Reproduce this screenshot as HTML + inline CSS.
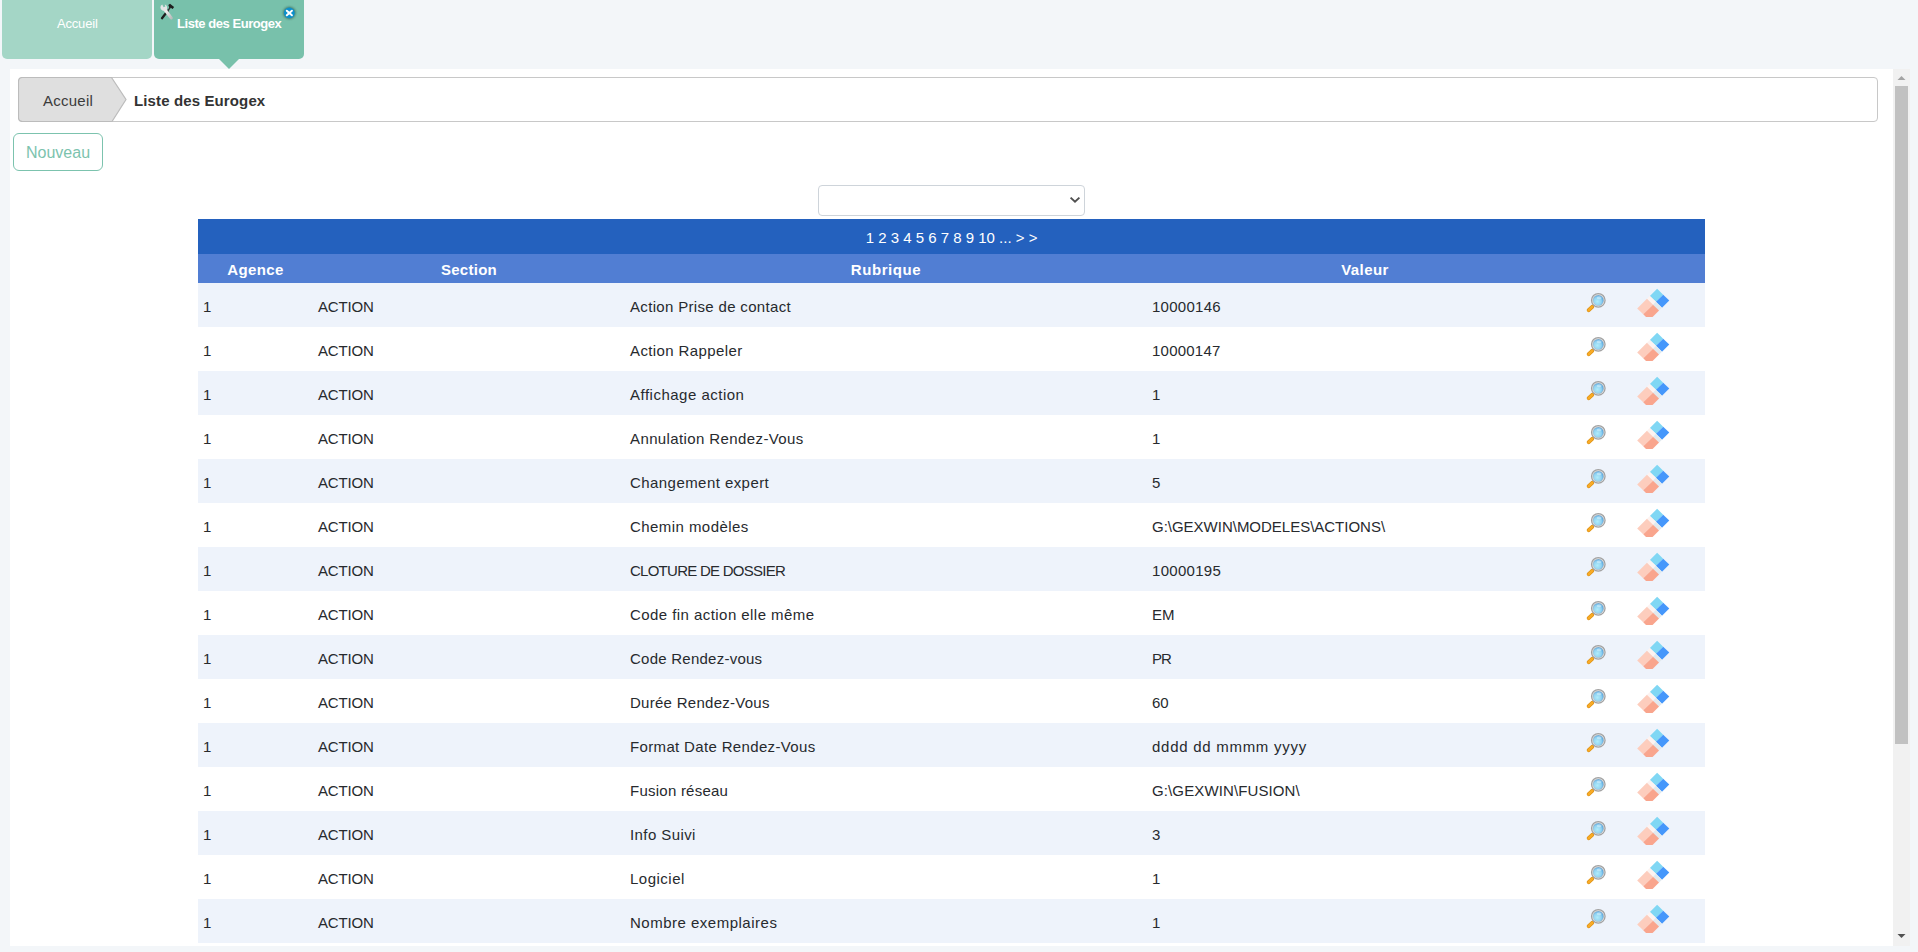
<!DOCTYPE html>
<html><head><meta charset="utf-8">
<style>
html,body{margin:0;padding:0;width:1918px;height:952px;overflow:hidden;background:#f3f6f9;font-family:"Liberation Sans",sans-serif;}
.abs{position:absolute;}
.tab1{left:2px;top:0;width:150px;height:59px;background:#a4d6c6;border-radius:0 0 5px 5px;}
.tab1 .t{position:absolute;left:55px;top:17px;font-size:13px;line-height:13px;color:#fff;white-space:nowrap;}
.tab2{left:154px;top:0;width:150px;height:59px;background:#78c1ab;border-radius:0 0 5px 5px;}
.tab2 .t{position:absolute;left:23px;top:17px;font-size:13px;line-height:13px;font-weight:bold;color:#fff;white-space:nowrap;}
.tab2arrow{left:218px;top:58px;width:0;height:0;border-left:11px solid transparent;border-right:11px solid transparent;border-top:11px solid #78c1ab;}
.content{left:10px;top:69px;width:1900px;height:877px;background:#fff;}
.sb{left:1893px;top:69px;width:17px;height:877px;background:#f1f1f1;}
.thumb{left:1895px;top:86px;width:13px;height:658px;background:#c1c1c1;}
.bc{left:18px;top:77px;width:1858px;height:43px;border:1px solid #c8c8c8;border-radius:4px;background:#fff;}
.bc .home{position:absolute;left:24px;top:15px;font-size:15px;line-height:15px;color:#3b3b3b;white-space:nowrap;}
.bc .cur{position:absolute;left:115px;top:15px;font-size:15px;line-height:15px;font-weight:bold;color:#333;white-space:nowrap;}
.btn{left:13px;top:133px;width:88px;height:36px;border:1px solid #7cc3ae;border-radius:6px;}
.btn .t{position:absolute;left:12px;top:11px;color:#7cc3ae;font-size:16px;line-height:16px;white-space:nowrap;}
.sel{left:818px;top:185px;width:265px;height:29px;border:1px solid #ced4da;border-radius:4px;background:#fff;}
table{position:absolute;left:198px;top:219px;width:1507px;border-collapse:collapse;table-layout:fixed;font-size:15px;color:#272a2e;}
td,th{padding:0 0 0 5px;white-space:nowrap;}
tr.pg{height:35px;}
tr.pg td{background:#2461be;color:#fff;text-align:center;font-size:15px;padding:1px 0 0 0;}
tr.hd{height:29px;}
tr.hd th{background:#517ed3;color:#fff;text-align:center;font-size:15px;padding:2px 0 0 0;}
tr.r{height:44px;}
tr.r td{vertical-align:top;padding-top:15px;line-height:17px;position:relative;}
tr.r:nth-child(odd) td{background:#eef3fb;}
td.ic{padding:0 !important;}
.mg{position:absolute;left:-1px;top:5px;}
.er{position:absolute;left:-1px;top:1px;}
</style></head>
<body>
<svg width="0" height="0" style="position:absolute">
<defs>
<radialGradient id="lens" cx="0.42" cy="0.6" r="0.6"><stop offset="0" stop-color="#b0ecfa"/><stop offset="0.6" stop-color="#92d3f2"/><stop offset="1" stop-color="#4e9fdc"/></radialGradient>
<clipPath id="ecl"><rect x="0" y="0" width="42" height="33"/></clipPath>
<symbol id="mag" viewBox="0 0 30 28">
<line x1="12.6" y1="16.2" x2="10" y2="18.8" stroke="#a9a9a9" stroke-width="2.6"/>
<line x1="10.2" y1="18.8" x2="6.7" y2="22.2" stroke="#d88c12" stroke-width="3.9" stroke-linecap="round"/>
<line x1="10.2" y1="18.8" x2="6.7" y2="22.2" stroke="#f8ab26" stroke-width="2.7" stroke-linecap="round"/>
<circle cx="16.3" cy="12.35" r="6.75" fill="#f0f0f0" stroke="#a2a2a2" stroke-width="1.3"/>
<circle cx="16.3" cy="12.35" r="5.4" fill="url(#lens)" stroke="#b9b9b9" stroke-width="0.6"/>
<ellipse cx="17.2" cy="9.8" rx="2.4" ry="1.5" fill="#e8f8ff" opacity="0.45"/>
</symbol>
<symbol id="era" viewBox="0 0 42 38">
<g clip-path="url(#ecl)">
<polygon points="25.15,4.8 31.21,10.69 23.94,17.84 17.87,11.95" fill="#80d7f4"/>
<polygon points="31.21,10.69 37.27,16.57 30.0,23.72 23.94,17.84" fill="#4597fb"/>
<polygon points="17.87,11.95 23.94,17.84 21.01,20.71 14.95,14.82" fill="#fdf3f1"/>
<polygon points="23.94,17.84 30.0,23.72 27.07,26.6 21.01,20.71" fill="#e1e9ee"/>
<polygon points="14.95,14.82 21.01,20.71 11.24,30.31 5.18,24.42" fill="#fdcdbd"/>
<polygon points="21.01,20.71 27.07,26.6 17.3,36.2 11.24,30.31" fill="#f9a58d"/>
</g>
</symbol>
</defs></svg>
<div class="abs tab1"><span class="t"><span style="letter-spacing:-0.183px">Accueil</span></span></div>
<div class="abs tab2"><span class="t"><span style="letter-spacing:-0.45px">Liste des Eurogex</span></span>
<svg class="abs" style="left:2px;top:0px" width="24" height="24" viewBox="0 0 24 24">
<defs><linearGradient id="wr" x1="0" y1="0" x2="1" y2="1"><stop offset="0" stop-color="#f4f4f4"/><stop offset="1" stop-color="#bdbdbd"/></linearGradient></defs>
<line x1="6" y1="18.2" x2="11.6" y2="11" stroke="#1e1e1e" stroke-width="2.3" stroke-linecap="round"/>
<line x1="11.3" y1="11.4" x2="14.6" y2="7" stroke="#333" stroke-width="1.3"/>
<path d="M12.3,5.0 L14.0,3.8 L18.1,6.9 L16.7,9.0 L14.3,7.6 L13.4,8.0 Z" fill="#1e1e1e"/>
<line x1="9.4" y1="10.2" x2="15.2" y2="17.9" stroke="url(#wr)" stroke-width="3.1" stroke-linecap="round"/>
<path d="M4.4,7.6 A3.4,3.4 0 0 1 6.2,4.5 L7.6,7.2 L9.4,6.6 L8.8,4.4 A3.4,3.4 0 0 1 10.4,9.8 L9.2,11.2 L6.4,10.6 A3.4,3.4 0 0 1 4.4,7.6Z" fill="#e6e6e6"/>
</svg>
<svg class="abs" style="left:126px;top:2px" width="20" height="22" viewBox="0 0 20 22">
<defs><filter id="blr" x="-50%" y="-50%" width="200%" height="200%"><feGaussianBlur stdDeviation="1.1"/></filter></defs>
<circle cx="9.34" cy="10.97" r="6.2" fill="#1d3f37" opacity="0.55" filter="url(#blr)"/>
<circle cx="9.34" cy="10.97" r="5.4" fill="#0b90cc"/>
<path d="M6.8,8.7 L11.9,13.3 M11.9,8.7 L6.8,13.3" stroke="#fff" stroke-width="2" stroke-linecap="round"/>
</svg>
</div>
<div class="abs tab2arrow"></div>
<div class="abs content"></div>
<div class="abs sb"></div>
<div class="abs thumb"></div>
<svg class="abs" style="left:1896px;top:74px" width="11" height="8"><path d="M1.5,6 L5.5,2 L9.5,6 Z" fill="#a3a3a3"/></svg>
<svg class="abs" style="left:1896px;top:932px" width="11" height="8"><path d="M1.5,2 L5.5,6 L9.5,2 Z" fill="#505050"/></svg>
<div class="abs bc">
<svg class="abs" style="left:-1px;top:-1px" width="120" height="45" viewBox="0 0 120 45"><path d="M4.5,0.5 L93.5,0.5 L108,22.5 L94,44.5 L4.5,44.5 Q0.5,44.5 0.5,40.5 L0.5,4.5 Q0.5,0.5 4.5,0.5Z" fill="#dfdfdf" stroke="#bcbcbc" stroke-width="1.2"/></svg>
<span class="home"><span style="letter-spacing:0.250px">Accueil</span></span><span class="cur"><span style="letter-spacing:0.125px">Liste des Eurogex</span></span></div>
<div class="abs btn"><span class="t"><span style="letter-spacing:0px">Nouveau</span></span></div>
<div class="abs sel"><svg class="abs" style="left:250px;top:0px" width="14" height="22"><path d="M1.6,11.6 L6,15.8 L10.4,11.6" fill="none" stroke="#4f4f4f" stroke-width="1.9"/></svg></div>
<table>
<colgroup><col style="width:115px"><col style="width:312px"><col style="width:522px"><col style="width:436px"><col style="width:50px"><col style="width:72px"></colgroup>
<tr class="pg"><td colspan="6">1 2 3 4 5 6 7 8 9 10 ... &gt; &gt;</td></tr>
<tr class="hd"><th><span style="letter-spacing:0.400px">Agence</span></th><th><span style="letter-spacing:0.283px">Section</span></th><th><span style="letter-spacing:0.557px">Rubrique</span></th><th><span style="letter-spacing:0.420px">Valeur</span></th><th></th><th></th></tr>
<tr class="r"><td>1</td><td><span style="letter-spacing:-0.160px">ACTION</span></td><td><span style="letter-spacing:0.332px">Action Prise de contact</span></td><td><span style="letter-spacing:0.271px">10000146</span></td><td class="ic"><svg width="30" height="28" class="mg"><use href="#mag"/></svg></td><td class="ic"><svg width="42" height="38" class="er"><use href="#era"/></svg></td></tr>
<tr class="r"><td>1</td><td><span style="letter-spacing:-0.160px">ACTION</span></td><td><span style="letter-spacing:0.386px">Action Rappeler</span></td><td><span style="letter-spacing:0.229px">10000147</span></td><td class="ic"><svg width="30" height="28" class="mg"><use href="#mag"/></svg></td><td class="ic"><svg width="42" height="38" class="er"><use href="#era"/></svg></td></tr>
<tr class="r"><td>1</td><td><span style="letter-spacing:-0.160px">ACTION</span></td><td><span style="letter-spacing:0.500px">Affichage action</span></td><td><span style="letter-spacing:0.000px">1</span></td><td class="ic"><svg width="30" height="28" class="mg"><use href="#mag"/></svg></td><td class="ic"><svg width="42" height="38" class="er"><use href="#era"/></svg></td></tr>
<tr class="r"><td>1</td><td><span style="letter-spacing:-0.160px">ACTION</span></td><td><span style="letter-spacing:0.390px">Annulation Rendez-Vous</span></td><td><span style="letter-spacing:0.000px">1</span></td><td class="ic"><svg width="30" height="28" class="mg"><use href="#mag"/></svg></td><td class="ic"><svg width="42" height="38" class="er"><use href="#era"/></svg></td></tr>
<tr class="r"><td>1</td><td><span style="letter-spacing:-0.160px">ACTION</span></td><td><span style="letter-spacing:0.438px">Changement expert</span></td><td><span style="letter-spacing:0.000px">5</span></td><td class="ic"><svg width="30" height="28" class="mg"><use href="#mag"/></svg></td><td class="ic"><svg width="42" height="38" class="er"><use href="#era"/></svg></td></tr>
<tr class="r"><td>1</td><td><span style="letter-spacing:-0.160px">ACTION</span></td><td><span style="letter-spacing:0.438px">Chemin modèles</span></td><td><span style="letter-spacing:-0.012px">G:\GEXWIN\MODELES\ACTIONS\</span></td><td class="ic"><svg width="30" height="28" class="mg"><use href="#mag"/></svg></td><td class="ic"><svg width="42" height="38" class="er"><use href="#era"/></svg></td></tr>
<tr class="r"><td>1</td><td><span style="letter-spacing:-0.160px">ACTION</span></td><td><span style="letter-spacing:-0.741px">CLOTURE DE DOSSIER</span></td><td><span style="letter-spacing:0.286px">10000195</span></td><td class="ic"><svg width="30" height="28" class="mg"><use href="#mag"/></svg></td><td class="ic"><svg width="42" height="38" class="er"><use href="#era"/></svg></td></tr>
<tr class="r"><td>1</td><td><span style="letter-spacing:-0.160px">ACTION</span></td><td><span style="letter-spacing:0.442px">Code fin action elle même</span></td><td><span style="letter-spacing:0.000px">EM</span></td><td class="ic"><svg width="30" height="28" class="mg"><use href="#mag"/></svg></td><td class="ic"><svg width="42" height="38" class="er"><use href="#era"/></svg></td></tr>
<tr class="r"><td>1</td><td><span style="letter-spacing:-0.160px">ACTION</span></td><td><span style="letter-spacing:0.247px">Code Rendez-vous</span></td><td><span style="letter-spacing:-1.000px">PR</span></td><td class="ic"><svg width="30" height="28" class="mg"><use href="#mag"/></svg></td><td class="ic"><svg width="42" height="38" class="er"><use href="#era"/></svg></td></tr>
<tr class="r"><td>1</td><td><span style="letter-spacing:-0.160px">ACTION</span></td><td><span style="letter-spacing:0.275px">Durée Rendez-Vous</span></td><td><span style="letter-spacing:0.000px">60</span></td><td class="ic"><svg width="30" height="28" class="mg"><use href="#mag"/></svg></td><td class="ic"><svg width="42" height="38" class="er"><use href="#era"/></svg></td></tr>
<tr class="r"><td>1</td><td><span style="letter-spacing:-0.160px">ACTION</span></td><td><span style="letter-spacing:0.345px">Format Date Rendez-Vous</span></td><td><span style="letter-spacing:0.725px">dddd dd mmmm yyyy</span></td><td class="ic"><svg width="30" height="28" class="mg"><use href="#mag"/></svg></td><td class="ic"><svg width="42" height="38" class="er"><use href="#era"/></svg></td></tr>
<tr class="r"><td>1</td><td><span style="letter-spacing:-0.160px">ACTION</span></td><td><span style="letter-spacing:0.242px">Fusion réseau</span></td><td><span style="letter-spacing:0.119px">G:\GEXWIN\FUSION\</span></td><td class="ic"><svg width="30" height="28" class="mg"><use href="#mag"/></svg></td><td class="ic"><svg width="42" height="38" class="er"><use href="#era"/></svg></td></tr>
<tr class="r"><td>1</td><td><span style="letter-spacing:-0.160px">ACTION</span></td><td><span style="letter-spacing:0.411px">Info Suivi</span></td><td><span style="letter-spacing:0.000px">3</span></td><td class="ic"><svg width="30" height="28" class="mg"><use href="#mag"/></svg></td><td class="ic"><svg width="42" height="38" class="er"><use href="#era"/></svg></td></tr>
<tr class="r"><td>1</td><td><span style="letter-spacing:-0.160px">ACTION</span></td><td><span style="letter-spacing:0.500px">Logiciel</span></td><td><span style="letter-spacing:0.000px">1</span></td><td class="ic"><svg width="30" height="28" class="mg"><use href="#mag"/></svg></td><td class="ic"><svg width="42" height="38" class="er"><use href="#era"/></svg></td></tr>
<tr class="r"><td>1</td><td><span style="letter-spacing:-0.160px">ACTION</span></td><td><span style="letter-spacing:0.500px">Nombre exemplaires</span></td><td><span style="letter-spacing:0.000px">1</span></td><td class="ic"><svg width="30" height="28" class="mg"><use href="#mag"/></svg></td><td class="ic"><svg width="42" height="38" class="er"><use href="#era"/></svg></td></tr>
</table>
</body></html>
